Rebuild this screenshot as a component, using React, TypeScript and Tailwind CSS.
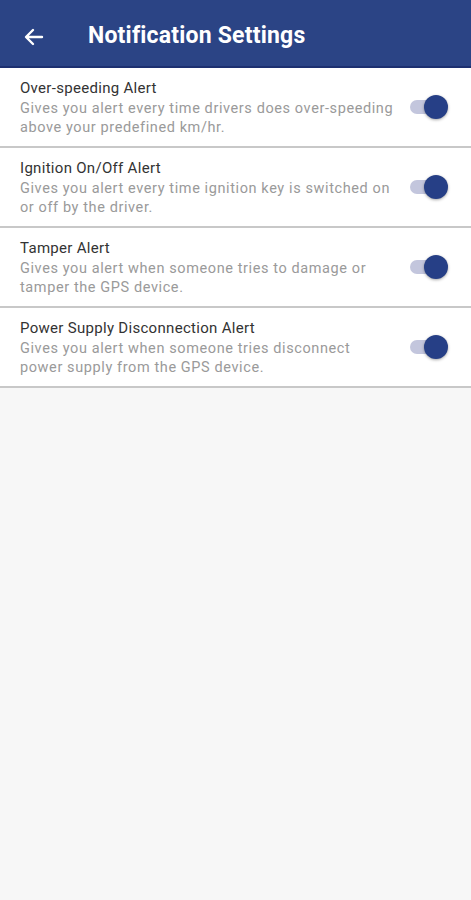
import React from "react";

const items = [
  {
    title: "Over-speeding Alert",
    desc: ["Gives you alert every time drivers does over-speeding", "above your predefined km/hr."],
  },
  {
    title: "Ignition On/Off Alert",
    desc: ["Gives you alert every time ignition key is switched on", "or off by the driver."],
  },
  {
    title: "Tamper Alert",
    desc: ["Gives you alert when someone tries to damage or", "tamper the GPS device."],
  },
  {
    title: "Power Supply Disconnection Alert",
    desc: ["Gives you alert when someone tries disconnect", "power supply from the GPS device."],
  },
];

function Toggle() {
  return (
    <div className="relative w-[38px] h-[24px] shrink-0">
      <div className="absolute left-0 top-[5px] w-[36px] h-[14px] rounded-full bg-[#c3c6dd]" />
      <div className="absolute right-0 top-0 w-[24px] h-[24px] rounded-full bg-[#263f86] shadow-[0_1px_3px_rgba(0,0,0,0.35)]" />
    </div>
  );
}

export default function App() {
  return (
    <div
      className="w-[471px] h-[900px] bg-[#f7f7f7] flex flex-col"
      style={{ fontFamily: "Roboto, 'Noto Sans', sans-serif" }}
    >
      <div className="h-[68px] pt-[7px] bg-[#2b4485] flex items-center border-b-2 border-[#1d3070] shrink-0">
        <div className="w-[88px] pl-[22px] flex items-center">
          <svg width="24" height="24" viewBox="0 0 24 24" fill="none">
            <path
              d="M20 12H5M11 5l-7 7 7 7"
              stroke="white"
              strokeWidth="2.4"
              strokeLinecap="round"
              strokeLinejoin="round"
            />
          </svg>
        </div>
        <div className="text-white text-[23px] font-bold tracking-[0.2px]">Notification Settings</div>
      </div>
      <div className="bg-white">
        {items.map((it) => (
          <div
            key={it.title}
            className="h-[80px] border-b-2 border-[#c8c8c8] flex items-center pl-[20px] pr-[23px]"
          >
            <div className="flex-1 pr-[6px] pt-[2px]">
              <div className="text-[15px] leading-[19px] tracking-[0.3px] text-[#333333]">{it.title}</div>
              <div className="mt-[2px] text-[14.5px] leading-[18.5px] tracking-[0.6px] text-[#9a9a9a] whitespace-nowrap">
                {it.desc.map((l) => (
                  <div key={l}>{l}</div>
                ))}
              </div>
            </div>
            <Toggle />
          </div>
        ))}
      </div>
    </div>
  );
}
